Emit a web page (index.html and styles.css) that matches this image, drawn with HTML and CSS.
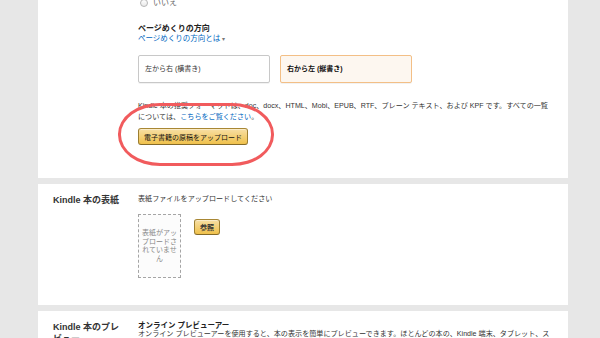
FILE: index.html
```html
<!DOCTYPE html>
<html lang="ja">
<head>
<meta charset="utf-8">
<link rel="stylesheet" href="styles.css">
</head>
<body>
<div class="page">
  <section class="panel panel-first">
    <div class="label"></div>
    <div class="content">
      <div class="radio-row"><span class="radio"></span><span>いいえ</span></div>
      <h3 class="sub-heading">ページめくりの方向</h3>
      <a class="link" href="#">ページめくりの方向とは <span class="caret">▾</span></a>
      <div class="choices">
        <div class="choice">左から右 (横書き)</div>
        <div class="choice choice-selected">右から左 (縦書き)</div>
      </div>
      <p class="para">Kindle 本の推奨フォーマットは、doc、docx、HTML、Mobi、EPUB、RTF、プレーン テキスト、および KPF です。すべての一覧<br>については、<a class="link" href="#">こちらをご覧ください</a>。</p>
      <button class="btn btn-upload">電子書籍の原稿をアップロード</button>
    </div>
    <div class="annot"></div>
  </section>

  <section class="panel panel-cover">
    <div class="label">Kindle 本の表紙</div>
    <div class="content">
      <p class="para">表紙ファイルをアップロードしてください</p>
      <div class="cover-row">
        <div class="cover-box">表紙がアップロードされていません</div>
        <button class="btn btn-browse">参照</button>
      </div>
    </div>
  </section>

  <section class="panel panel-preview">
    <div class="label">Kindle 本のプレビュー</div>
    <div class="content">
      <h3 class="sub-heading small">オンライン プレビューアー</h3>
      <p class="para tight">オンライン プレビューアーを使用すると、本の表示を簡単にプレビューできます。ほとんどの本の、Kindle 端末、タブレット、スマートフォンでの表示を確認できます。</p>
    </div>
  </section>
</div>
</body>
</html>
```

FILE: styles.css
```css
html, body {
  margin: 0;
  padding: 0;
}
body {
  background: #e7e7e7;
  font-family: "Liberation Sans", "Noto Sans CJK JP", sans-serif;
  color: #222;
  overflow: hidden;
  height: 338px;
}
.page {
  width: 530px;
  margin-left: 38px;
  display: flex;
  flex-direction: column;
  gap: 6px;
}
.panel {
  position: relative;
  background: #fff;
  display: grid;
  grid-template-columns: 85px 1fr;
  padding: 0 8px 0 15px;
}
.panel-preview {
  padding-right: 12px;
}
.label {
  font-size: 9px;
  font-weight: bold;
  line-height: 12px;
  color: #333;
  width: 72px;
}
.content {
  min-width: 0;
  font-size: 7px;
  line-height: 10px;
}
.panel-first {
  height: 178px;
  box-sizing: border-box;
}
.panel-cover {
  height: 121px;
  box-sizing: border-box;
  padding-top: 10px;
}
.panel-preview {
  padding-top: 10px;
  height: 60px;
}
.radio-row {
  display: flex;
  align-items: center;
  gap: 5px;
  height: 8px;
  margin: -1px 0 0 2px;
  font-size: 8px;
  color: #666;
  line-height: 8px;
}
.radio {
  width: 6px;
  height: 6px;
  border: 1px solid #b5b5b5;
  border-radius: 50%;
  background: linear-gradient(#fff, #e9e9e9);
}
.sub-heading {
  margin: 17px 0 0;
  font-size: 8px;
  line-height: 10px;
  font-weight: bold;
  color: #222;
}
.sub-heading.small {
  margin: 0;
  font-size: 7.5px;
  line-height: 9px;
}
.link {
  color: #0066c0;
  text-decoration: none;
  font-size: 7.5px;
  line-height: 10px;
  display: block;
}
.para .link {
  font-size: inherit;
  line-height: inherit;
  display: inline;
}
.caret {
  color: #777;
  font-size: 6px;
}
.choices {
  display: flex;
  gap: 10px;
  margin-top: 11px;
}
.choice {
  width: 132px;
  height: 28px;
  box-sizing: border-box;
  border: 1px solid #c8c8c8;
  border-radius: 2px;
  box-shadow: 0 1px 0 rgba(0,0,0,0.05);
  font-size: 7px;
  display: flex;
  align-items: center;
  padding-left: 6px;
  color: #333;
}
.choice-selected {
  border-color: #f3bf86;
  background: #fdf7f0;
  font-weight: bold;
  color: #111;
}
.para {
  margin: 18px 0 0;
  font-size: 7.1px;
  line-height: 11px;
  color: #333;
}
.para.tight {
  margin: 0;
  line-height: 9px;
}
.panel-cover .para {
  margin: 0;
  line-height: 11px;
}
.btn {
  font-family: inherit;
  border: 1px solid;
  border-color: #a88734 #9c7e31 #846a29;
  border-radius: 3px;
  background: linear-gradient(#f7dfa5, #f0c14b);
  box-shadow: inset 0 1px 0 rgba(255,255,255,0.4);
  color: #111;
  font-size: 7px;
  padding: 0;
  cursor: pointer;
}
.btn-upload {
  display: block;
  margin-top: 5px;
  width: 110px;
  height: 17px;
}
.cover-row {
  display: flex;
  align-items: flex-start;
  gap: 13px;
  margin-top: 9px;
}
.cover-box {
  width: 43px;
  height: 64px;
  box-sizing: border-box;
  border: 1px dashed #a5a5a5;
  background: #fcfcfc;
  color: #888;
  font-size: 7px;
  line-height: 8.5px;
  text-align: center;
  display: flex;
  align-items: center;
  padding: 0 3px;
}
.btn-browse {
  margin-top: 5px;
  width: 26px;
  height: 16px;
  font-weight: bold;
  color: #333;
}
.annot {
  position: absolute;
  left: 80px;
  top: 103px;
  width: 156px;
  height: 63px;
  box-sizing: border-box;
  border: 3px solid #f15b5d;
  border-radius: 42px / 31px;
  pointer-events: none;
}
```
